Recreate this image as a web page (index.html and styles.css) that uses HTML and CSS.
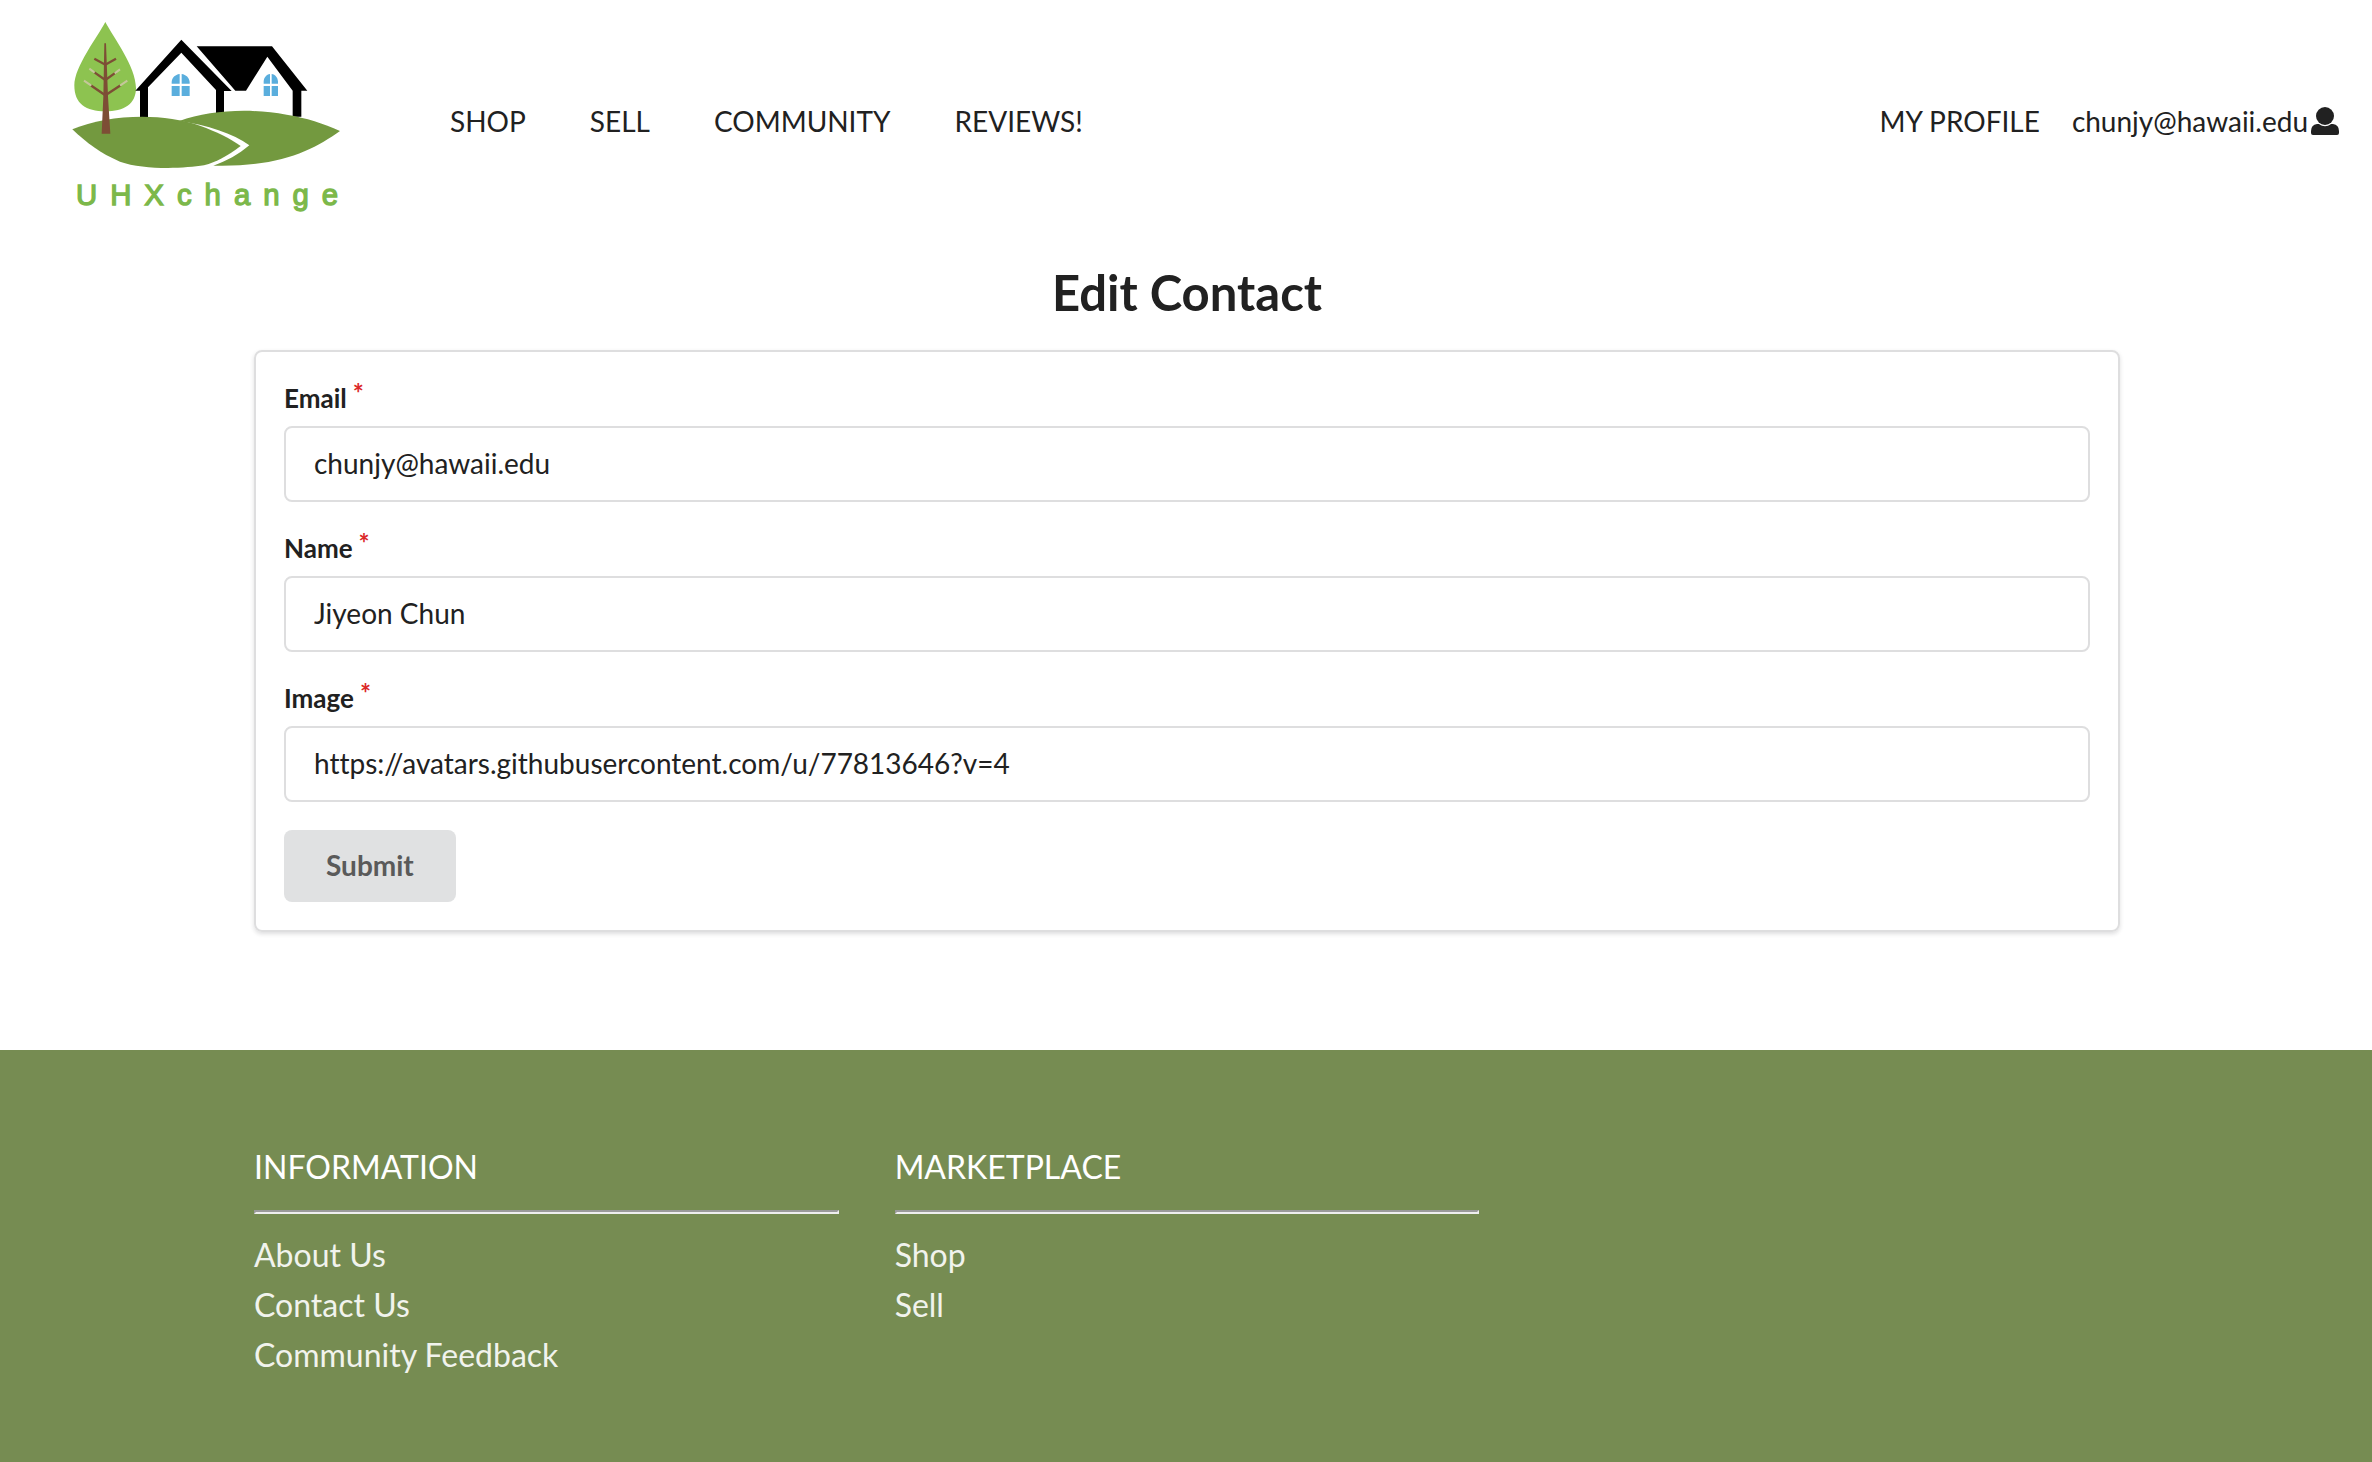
FILE: index.html
```html
<!DOCTYPE html>
<html lang="en">
<head>
  <meta charset="utf-8">
  <title>UHXchange - Edit Contact</title>
  <link rel="stylesheet" href="styles.css">
</head>
<body>
  <header class="topbar">
    <a class="logo" href="#" aria-label="UHXchange home">
      <svg class="logo-art" viewBox="0 0 960 690" aria-hidden="true">
        <!-- tree -->
        <path fill="#8dc350" d="M166 66C190 112 258 200 258 264C258 312 222 334 166 334C108 334 73 312 73 256C73 200 142 112 166 66Z"/>
        <!-- houses -->
        <path fill="#000" d="M440 139H666L772 272H754V350H728V272L652 170L588 272H556Z"/>
        <path fill="#000" d="M394 119L545 273H522V342H498V270L394 158L294 262V356H270V272H256Z"/>
        <!-- windows -->
        <g fill="#5aaedd">
          <path d="M365 251V246C366 233 375 224 389 222V251ZM395 222C408 224 418 233 419 246V251H395ZM365 258H389V288H365ZM395 258H419V288H395Z"/>
          <path d="M641 251V244C642 232 649 224 660 222V251ZM665 222C676 224 683 232 684 244V251H665ZM641 258H660V288H641ZM665 258H684V288H665Z"/>
        </g>
        <!-- hills -->
        <g fill="#73993f">
          <path d="M67 388C170 345 330 335 450 377C500 395 540 415 572 438C530 470 500 485 462 496C400 506 280 510 210 485C150 460 110 428 67 388Z"/>
          <path d="M388 363C480 330 600 324 710 344C770 354 820 370 870 393C790 450 690 502 490 497C530 483 565 464 598 436C550 400 470 375 388 363Z"/>
        </g>
        <!-- trunk and branches -->
        <path fill="#7d4e35" d="M163 130H168L174 290L181 401H155L160 290Z"/>
        <g fill="none" stroke="#7d4e35" stroke-width="7">
          <path d="M133 176L166 194L198 176M130 215L166 240L198 217M122 256L166 286L212 256"/>
        </g>
        <g fill="none" stroke="#c5c79a" stroke-width="6">
          <path d="M118 206L134 218M194 220L210 208M102 242L124 257M210 257L232 242"/>
        </g>
        <text class="logo-text" x="78" y="615">UHXchange</text>
      </svg>
    </a>
    <nav class="menu">
      <a href="#">SHOP</a>
      <a href="#">SELL</a>
      <a href="#">COMMUNITY</a>
      <a href="#">REVIEWS!</a>
    </nav>
    <div class="account">
      <a href="#">MY PROFILE</a>
      <a class="user" href="#">chunjy@hawaii.edu<svg class="user-icon" viewBox="0 0 28 28" aria-hidden="true"><circle cx="14" cy="9" r="9"/><path d="M6 17H8C12 20 16 20 20 17H22Q28 18 28 24V26Q28 28 26 28H2Q0 28 0 26V24Q0 18 6 17Z"/></svg></a>
    </div>
  </header>

  <main class="container">
    <h2 class="title">Edit Contact</h2>
    <form class="card">
      <div class="field">
        <label for="email">Email<span class="required">*</span></label>
        <input id="email" type="text" value="chunjy@hawaii.edu">
      </div>
      <div class="field">
        <label for="name">Name<span class="required">*</span></label>
        <input id="name" type="text" value="Jiyeon Chun">
      </div>
      <div class="field">
        <label for="image">Image<span class="required">*</span></label>
        <input id="image" type="text" value="https://avatars.githubusercontent.com/u/77813646?v=4">
      </div>
      <button class="submit" type="submit">Submit</button>
    </form>
  </main>

  <footer class="footer">
    <div class="container columns">
      <section>
        <h3>INFORMATION</h3>
        <hr>
        <ul>
          <li><a href="#">About Us</a></li>
          <li><a href="#">Contact Us</a></li>
          <li><a href="#">Community Feedback</a></li>
        </ul>
      </section>
      <section>
        <h3>MARKETPLACE</h3>
        <hr>
        <ul>
          <li><a href="#">Shop</a></li>
          <li><a href="#">Sell</a></li>
        </ul>
      </section>
    </div>
  </footer>
</body>
</html>
```
FILE: styles.css
```css
* {
  box-sizing: border-box;
}

body {
  margin: 0;
  min-height: 100vh;
  display: flex;
  flex-direction: column;
  background: #fff;
  color: #212121;
  font-family: Lato, "Liberation Sans", sans-serif;
  font-size: 28px;
  font-variant-ligatures: none;
  line-height: 40px;
}

a {
  color: inherit;
  text-decoration: none;
}

.topbar {
  display: flex;
  align-items: center;
  min-height: 242px;
  padding: 0 33px 0 50px;
}

.logo {
  align-self: flex-start;
  margin-right: 80px;
}

.logo-art {
  display: block;
  width: 320px;
  height: 230px;
}

.logo-text {
  fill: #7cb84a;
  stroke: #7cb84a;
  stroke-width: 4px;
  font-family: "Liberation Sans", sans-serif;
  font-size: 88px;
  letter-spacing: 39px;
}

.menu {
  display: flex;
  gap: 64px;
}

.account {
  display: flex;
  gap: 32px;
  margin-left: auto;
}

.user {
  display: flex;
  align-items: center;
  gap: 3px;
}

.user-icon {
  width: 28px;
  height: 28px;
  fill: #212121;
}

.container {
  width: 100%;
  max-width: 1868px;
  margin: 0 auto;
  padding-left: 2px;
}

.title {
  margin: 18px 0 26px;
  font-size: 49px;
  line-height: 64px;
  text-align: center;
}

.card {
  padding: 28px;
  border: 2px solid #dededf;
  border-radius: 8px;
  box-shadow: 0 2px 4px rgba(34, 36, 38, 0.15);
}

.field {
  margin-bottom: 28px;
}

.field label {
  display: block;
  margin-bottom: 10px;
  font-size: 26px;
  font-weight: 700;
  line-height: 36px;
}

.required {
  margin-left: 6px;
  color: #db2828;
  vertical-align: top;
  line-height: 26px;
}

.field input {
  display: block;
  width: 100%;
  height: 76px;
  padding: 0 28px 2px;
  border: 2px solid #dededf;
  border-radius: 8px;
  background: #fff;
  color: #212121;
  font: inherit;
  font-variant-ligatures: none;
}

.submit {
  display: block;
  height: 72px;
  padding: 0 42px 2px;
  border: 0;
  border-radius: 8px;
  background: #e0e1e2;
  color: #5a5a5a;
  font: inherit;
  font-weight: 700;
}

.footer {
  flex: 1;
  margin-top: 118px;
  padding: 92px 0 76px;
  background: #768c52;
  color: #fff;
  font-size: 32px;
  line-height: 50px;
}

.columns {
  display: grid;
  grid-template-columns: repeat(3, 1fr);
  gap: 56px;
}

.footer h3 {
  margin: 0;
  font-size: 32px;
  font-weight: 400;
}

.footer hr {
  height: 4px;
  margin: 18px 0 16px;
  border: 2px solid;
  border-color: #9a9a9a #eee #eee #9a9a9a;
}

.footer ul {
  margin: 0;
  padding: 0;
  list-style: none;
}

.footer li {
  color: #f1f3ed;
}
```
